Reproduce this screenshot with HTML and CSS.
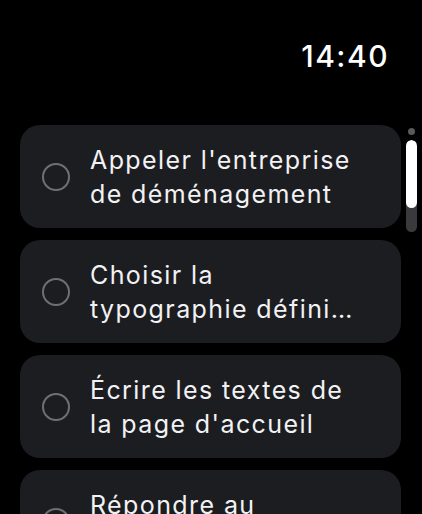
FILE: index.html
```html
<!DOCTYPE html>
<html lang="fr">
<head>
    <meta charset="UTF-8">
    <meta name="viewport" content="width=device-width, initial-scale=1.0">
    <title>Rappels</title>
    <link rel="stylesheet" href="styles.css">
</head>
<body>
    <div class="watch">
        <header class="status">
            <span class="time">14:40</span>
        </header>

        <div class="scroller">
            <ul class="tasks">
                <li class="task">
                    <span class="check"></span>
                    <span class="label">Appeler l'entreprise de déménagement</span>
                </li>
                <li class="task">
                    <span class="check"></span>
                    <span class="label">Choisir la typographie défini…</span>
                </li>
                <li class="task">
                    <span class="check"></span>
                    <span class="label">Écrire les textes de la page d'accueil</span>
                </li>
                <li class="task">
                    <span class="check"></span>
                    <span class="label">Répondre au propriétaire</span>
                </li>
            </ul>

            <!-- indicateur de défilement (couronne) -->
            <div class="scroll-indicator">
                <span class="dot"></span>
                <span class="track"><span class="thumb"></span></span>
            </div>
        </div>
    </div>
</body>
</html>
```

FILE: styles.css
```css
/* Reset */
body, ul, li {
    margin: 0;
    padding: 0;
}

body {
    background: #000;
    color: #fff;
    font-family: 'Inter', 'Noto Sans', sans-serif;
    overflow: hidden;
    height: 514px;
}

.watch {
    width: 422px;
    height: 514px;
    overflow: hidden;
}

/* Status bar */
.status {
    display: flex;
    justify-content: flex-end;
    padding: 38px 33px 0 0;
    height: 87px;
    box-sizing: border-box;
}

.time {
    font-size: 30px;
    font-weight: 500;
    letter-spacing: 1.5px;
    line-height: 36px;
}

/* Liste */
.scroller {
    position: relative;
    padding: 38px 0 0 20px;
}

.tasks {
    list-style: none;
    width: 381px;
    display: flex;
    flex-direction: column;
    gap: 12px;
}

.task {
    display: flex;
    align-items: center;
    gap: 20px;
    height: 103px;
    flex: none;
    box-sizing: border-box;
    padding: 0 10px 0 22px;
    background: #1c1d21;
    border-radius: 20px;
}

.check {
    flex: none;
    width: 24px;
    height: 24px;
    border: 2px solid #6f7075;
    border-radius: 50%;
}

.label {
    width: 272px;
    font-size: 25px;
    line-height: 34px;
    letter-spacing: 1.4px;
    color: #f2f2f4;
}

/* Indicateur de défilement */
.scroll-indicator {
    position: absolute;
    top: 41px;
    left: 406px;
    width: 11px;
    display: flex;
    flex-direction: column;
    align-items: center;
    gap: 5px;
}

.dot {
    width: 7px;
    height: 7px;
    border-radius: 50%;
    background: #5a5a5e;
}

.track {
    width: 11px;
    height: 92px;
    border-radius: 6px;
    background: #3a3a3c;
    overflow: hidden;
}

.thumb {
    display: block;
    height: 68px;
    border-radius: 6px;
    background: #fff;
}
```
